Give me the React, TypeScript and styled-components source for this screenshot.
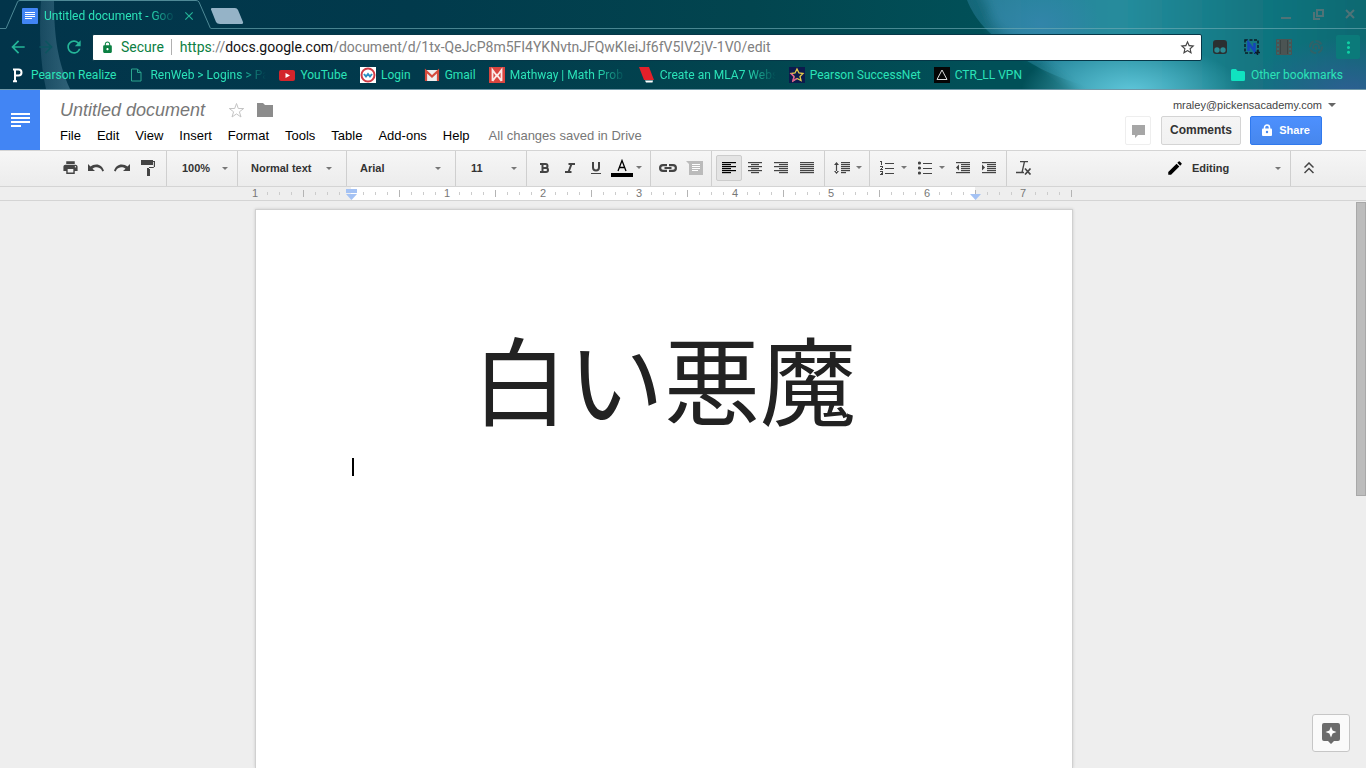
import React from "react";
import styled, { createGlobalStyle, css } from "styled-components";
import {
  MdPrint, MdLock, MdArrowBack, MdArrowForward, MdRefresh, MdStarBorder, MdMoreVert, MdClose, MdEdit,
} from "react-icons/md";

const Global = createGlobalStyle`
  *, *::before, *::after { box-sizing: border-box; }
  body { margin: 0; overflow: hidden; background: #eee; font-family: "Liberation Sans", Arial, sans-serif; }
  button, select, input { font: inherit; color: inherit; margin: 0; padding: 0; border: 0; background: none; border-radius: 0; }
  a { color: inherit; text-decoration: none; }
  svg { display: block; flex: none; }
`;

const Shell = styled.div`
  display: flex;
  flex-direction: column;
  height: 100vh;
`;

/* ---------- browser frame ---------- */

const Browser = styled.header`
  position: relative;
  display: flex;
  flex-direction: column;
  flex: none;
  height: 90px;
  border-bottom: 1px solid #6f98a8;
  color: #2be3b8;
  font-family: Roboto, sans-serif;
  font-size: 12px;
  background: linear-gradient(90deg, #02344a 0%, #013a4c 30%, #02454f 55%, #015058 72%, #015058 100%);
  isolation: isolate;
`;
const ThemeArt = styled.svg<{ $side: "left" | "right" }>`
  position: absolute;
  top: 0;
  ${(p) => p.$side}: 0;
  z-index: -1;
`;
const TabStrip = styled.div`
  display: flex;
  height: 29px;
`;
const StripEdge = styled.div<{ $grow?: boolean }>`
  display: flex;
  justify-content: space-between;
  align-items: center;
  flex: ${(p) => (p.$grow ? "1" : "0 0 6px")};
  border-bottom: 1px solid rgba(110, 170, 180, 0.65);
`;
const Tab = styled.div`
  position: relative;
  display: flex;
  align-items: center;
  gap: 6px;
  width: 205px;
  padding: 2px 15px 0 16px;
`;
const TabShape = styled.svg`
  position: absolute;
  left: 0;
  top: 0;
`;
const TabTitle = styled.span`
  flex: 1;
  overflow: hidden;
  white-space: nowrap;
  line-height: 16px;
  mask-image: linear-gradient(90deg, #000 80%, transparent);
`;
const PlainButton = styled.button`
  display: flex;
  align-items: center;
  justify-content: center;
`;
const NewTab = styled(PlainButton)`
  padding-top: 3px;
`;
const WindowControls = styled.div`
  display: flex;
  gap: 20px;
  padding-right: 10px;
  color: #4f7377;
`;
const NavRow = styled.div`
  display: flex;
  align-items: center;
  height: 36px;
  padding: 0 2px 0 8px;
`;
const NavButton = styled(PlainButton)<{ $dim?: boolean }>`
  width: 20px;
  height: 20px;
  margin-right: 8px;
  color: ${(p) => (p.$dim ? "#0d5560" : "#25b598")};
`;
const AddressBar = styled.div`
  display: flex;
  align-items: center;
  flex: 1;
  min-width: 0;
  height: 27px;
  margin-right: 2px;
  padding: 0 5px 0 8px;
  border: 1px solid #063748;
  border-radius: 2px;
  background: #fff;
  font-size: 14px;
  color: #0b8043;
  white-space: nowrap;
`;
const Secure = styled.span`
  padding: 0 7px;
  border-right: 1px solid #b0b0b0;
  margin-right: 8px;
`;
const Url = styled.div`
  flex: 1;
  overflow: hidden;
  color: #808080;
`;
const UrlScheme = styled.span`color: #0b8043;`;
const UrlHost = styled.span`color: #111;`;
const Extension = styled(PlainButton)<{ $active?: boolean }>`
  width: 24px;
  height: 24px;
  margin: 0 4px;
  border-radius: 2px;
  background: ${(p) => (p.$active ? "#0b7a7a" : "none")};
`;
const Bookmarks = styled.nav`
  display: flex;
  align-items: center;
  gap: 13px;
  height: 20px;
  padding: 0 23px 0 10px;
`;
const Bookmark = styled.a<{ $last?: boolean }>`
  display: flex;
  align-items: center;
  gap: 5px;
  white-space: nowrap;
  margin-left: ${(p) => (p.$last ? "auto" : "0")};
`;
const BookmarkLabel = styled.span<{ $fade?: boolean }>`
  line-height: 16px;
  ${(p) => p.$fade && css`
    width: 116px;
    mask-image: linear-gradient(90deg, #000 75%, transparent);
  `}
`;

/* ---------- document header ---------- */

const DocHeader = styled.header`
  display: flex;
  flex: none;
  height: 60px;
  background: #fff;
`;
const DocsHome = styled.a`
  display: flex;
  align-items: center;
  justify-content: center;
  width: 40px;
  background: #4285f4;
`;
const TitleBlock = styled.div`
  display: flex;
  flex-direction: column;
  flex: 1;
  padding: 8px 0 0 20px;
`;
const TitleRow = styled.div`
  display: flex;
  align-items: center;
  gap: 12px;
  height: 24px;
`;
const TitleInput = styled.input`
  width: 156px;
  height: 24px;
  font-size: 18px;
  font-style: italic;
  color: #777;
  outline: none;
`;
const MenuBar = styled.nav`
  display: flex;
  gap: 16px;
  height: 26px;
  align-items: center;
  font-size: 13px;
  color: #000;
`;
const SaveState = styled.span`
  margin-left: 3px;
  color: #777;
`;
const AccountBlock = styled.div`
  display: flex;
  flex-direction: column;
  align-items: flex-end;
  padding: 8px 30px 0 0;
`;
const Account = styled.button`
  display: flex;
  align-items: center;
  gap: 6px;
  height: 14px;
  font-size: 11px;
  color: #444;
`;
const Actions = styled.div`
  display: flex;
  gap: 9px;
  padding: 4px 14px 0 0;
`;
const Action = styled.button<{ $kind: "icon" | "plain" | "primary" }>`
  display: flex;
  align-items: center;
  justify-content: center;
  gap: 7px;
  height: 29px;
  padding-bottom: 2px;
  border-radius: 2px;
  font-size: 11px;
  font-weight: bold;
  ${(p) => p.$kind === "icon" && css`
    width: 26px;
    margin-right: 1px;
    padding: 2px 0 0;
    border: 1px solid #eee;
  `}
  ${(p) => p.$kind === "plain" && css`
    width: 80px;
    font-size: 12px;
    border: 1px solid #d4d4d4;
    background: linear-gradient(#f5f5f5, #f1f1f1);
    color: #333;
  `}
  ${(p) => p.$kind === "primary" && css`
    width: 72px;
    border: 1px solid #3079ed;
    background: linear-gradient(#4d90fe, #4787ed);
    color: #fff;
  `}
`;

/* ---------- toolbar ---------- */

const Toolbar = styled.div`
  display: flex;
  flex: none;
  height: 37px;
  border-top: 1px solid #d4d4d4;
  border-bottom: 1px solid #d4d4d4;
  background: linear-gradient(#f6f6f6, #ececec);
  color: #444;
  font-size: 11px;
  font-weight: bold;
`;
const Group = styled.div<{ $first?: boolean; $end?: boolean }>`
  display: flex;
  align-items: center;
  padding: 0 4px 2px;
  border-left: 1px solid #cfcfcf;
  ${(p) => p.$first && css`
    padding: 0 5px 2px 57px;
    border-left: 0;
  `}
  ${(p) => p.$end && css`
    width: 76px;
    padding-left: 5px;
  `}
`;
const Tool = styled.button<{ $on?: boolean }>`
  display: flex;
  align-items: center;
  justify-content: center;
  width: 26px;
  height: 26px;
  border: 1px solid ${(p) => (p.$on ? "#ccc" : "transparent")};
  border-radius: 2px;
  background: ${(p) => (p.$on ? "#e4e4e4" : "none")};
  color: ${(p) => (p.$on ? "#000" : "#444")};
`;
const ArrowTool = styled.button<{ $width?: number }>`
  display: flex;
  align-items: center;
  width: ${(p) => p.$width ?? 12}px;
  height: 26px;
  padding-left: 1px;
`;
const Picker = styled.label<{ $width: number; $inset: number }>`
  position: relative;
  display: flex;
  width: ${(p) => p.$width}px;
  border-left: 1px solid #cfcfcf;
  select {
    flex: 1;
    appearance: none;
    padding-left: ${(p) => p.$inset}px;
    padding-bottom: 2px;
    color: #333;
    outline: none;
  }
`;
const PickerArrow = styled.span<{ $right?: number }>`
  position: absolute;
  right: ${(p) => p.$right ?? 9}px;
  top: 16px;
  pointer-events: none;
`;
const ModePicker = styled(Picker)`
  margin-left: auto;
  border-left: 0;
`;
const ModeIcon = styled.span`
  position: absolute;
  left: 0;
  top: 8px;
  color: #000;
  pointer-events: none;
`;

/* ---------- ruler and page ---------- */

const RulerBar = styled.div`
  display: flex;
  justify-content: center;
  flex: none;
  height: 14px;
  padding-right: 40px;
  border-bottom: 1px solid #d4d4d4;
  overflow: hidden;
`;
const Scale = styled.div`
  position: relative;
  display: flex;
  flex: none;
  width: 816px;
  background: linear-gradient(90deg, transparent 96px, #fff 96px, #fff 720px, transparent 720px);
`;
const Mark = styled.span`
  display: flex;
  align-items: center;
  justify-content: center;
  flex: none;
  width: 12px;
  margin-left: -6px;
  margin-right: 6px;
  font-size: 11px;
  line-height: 13px;
  color: #777;
`;
const Tick = styled.i<{ $tall?: boolean }>`
  width: 1px;
  height: ${(p) => (p.$tall ? 7 : 3)}px;
  background: ${(p) => (p.$tall ? "#b4b4b4" : "#ccc")};
`;
const Indent = styled.svg<{ $at: "start" | "end" }>`
  position: absolute;
  top: 2px;
  left: ${(p) => (p.$at === "start" ? 90 : 714)}px;
`;
const Workspace = styled.main`
  display: flex;
  flex: 1;
  min-height: 0;
  background: #eee;
`;
const Canvas = styled.div`
  display: flex;
  justify-content: center;
  flex: 1;
  padding: 8px 28px 0 0;
`;
const Page = styled.article`
  width: 818px;
  padding: 96px;
  border: 1px solid #d0d0d0;
  border-bottom: 0;
  background: #fff;
  box-shadow: 0 0 3px rgba(0, 0, 0, 0.15);
`;
const Heading = styled.h1`
  margin: 0 0 10px;
  font: 400 96px/142px "Noto Sans CJK JP", sans-serif;
  color: #222;
  text-align: center;
`;
const Caret = styled.div`
  width: 2px;
  height: 18px;
  background: #000;
`;
const ScrollTrack = styled.div`
  width: 10px;
  padding-top: 1px;
`;
const ScrollThumb = styled.div`
  height: 52%;
  border: 1px solid #a8a8a8;
  background: #bcbcbc;
`;
const Explore = styled.button`
  position: fixed;
  right: 16px;
  bottom: 16px;
  display: flex;
  align-items: center;
  justify-content: center;
  width: 38px;
  height: 38px;
  border: 1px solid #c6c6c6;
  border-radius: 3px;
  background: #fafafa;
`;

const Down = ({ size = 6, color = "#777" }: { size?: number; color?: string }) => (
  <svg width={size} height={size / 2} viewBox="0 0 6 3"><path d="M0 0h6L3 3z" fill={color} /></svg>
);

/* Rows of a text block: x, width and y of each line */
const Lines = ({ rows, children, width = 14 }: { rows: number[][]; children?: React.ReactNode; width?: number }) => (
  <svg width={width} height="12" viewBox={`0 0 ${width} 12`} fill="currentColor">
    {rows.map(([x, w, y]) => <rect key={y} x={x} y={y} width={w} height="1.2" />)}
    {children}
  </svg>
);
const six = (short: number, align: number) =>
  [0, 1, 2, 3, 4, 5].map((i) => (i % 2 ? [(14 - short) * align, short, i * 2] : [0, 14, i * 2]));
const indented = [[0, 14, 0], [5, 9, 2], [5, 9, 4], [5, 9, 6], [5, 9, 8], [0, 14, 10]];

const UNDO = "M0 0v7h7L4.500 4.700C5.800 3.700 7.500 3.200 9 3.300c2.700.2 4.500 1.700 5.300 4.200L16 6.800C14.800 2.800 12 .5 8.300.5 6 .5 4 1.300 2.500 2.500z";

const DocIcon = () => (
  <svg width="16" height="16" viewBox="0 0 16 16">
    <rect width="16" height="16" rx="1" fill="#4285f4" />
    <path d="M3 4.500h10M3 6.500h10M3 8.500h10M3 10.500h7" stroke="#fff" strokeWidth="1.200" />
  </svg>
);

const bookmarks: { label: string; fade?: boolean; icon: React.ReactNode }[] = [
  { label: "Pearson Realize", icon: <path d="M5 15V2.500M3 2.500h5.500a3 3 0 010 6H6M3 14.300h4" fill="none" stroke="#fff" strokeWidth="2" /> },
  { label: "RenWeb > Logins > Pa", fade: true, icon: <path d="M2.500 2h6L12 5.500V14H2.500zM8.500 2v3.500H12" fill="none" stroke="#2aa58e" /> },
  { label: "YouTube", icon: <><rect y="3" width="16" height="11" rx="2" fill="#d3252c" /><path d="M6.500 6v5L11 8.500z" fill="#fff" /></> },
  { label: "Login", icon: <><rect width="16" height="16" fill="#fff" /><circle cx="8" cy="8" r="6.500" fill="#fff" stroke="#cf3b46" strokeWidth="2" /><path d="M4 7l2 2.500L8 7l2 2.500L12 7" fill="none" stroke="#2a8fc4" strokeWidth="2" /></> },
  { label: "Gmail", icon: <><path d="M1 3h14v11H1z" fill="#eee" /><path d="M2 14V4l6 5.500L14 4v10" fill="none" stroke="#d54b3d" strokeWidth="2.200" /></> },
  { label: "Mathway | Math Prob", fade: true, icon: <><rect width="16" height="16" fill="#d9453f" /><path d="M3.500 14V3L8 9l4.500-6v11M3.500 14L8 8l4.500 6" fill="none" stroke="#fbe9e7" strokeWidth="1.800" /></> },
  { label: "Create an MLA7 Webs", fade: true, icon: <><path d="M0 0h10l5 13H5z" fill="#e4202a" /><path d="M6 13.500h8l-.5 2H7z" fill="#fff" /></> },
  { label: "Pearson SuccessNet", icon: <><rect width="16" height="16" fill="#0c1a4d" /><path d="M8 2l2 4 4 .5-3 3 1 4-4-2-4 2.500 1-4.500-3-3 4-.5z" fill="none" stroke="#e3c94a" strokeWidth="1.300" /><path d="M5 9.500L4 14l4-2.500M2 6.500l3 3" fill="none" stroke="#e0559c" strokeWidth="1.300" /></> },
  { label: "CTR_LL VPN", icon: <><rect width="16" height="16" fill="#050505" /><path d="M8 3l5 9.500H3z" fill="none" stroke="#ddd" /></> },
];

function BrowserFrame() {
  return (
    <Browser>
      <ThemeArt $side="left" width="90" height="89" aria-hidden>
        <defs>
          <linearGradient id="beam" x1="0" x2="1">
            <stop offset="0" stopColor="#5d8ea6" stopOpacity=".25" /><stop offset="1" stopColor="#5d8ea6" stopOpacity=".5" />
          </linearGradient>
        </defs>
        <path d="M41 0h13c0 38 4 62 16 89H46C40 62 39 30 41 0z" fill="url(#beam)" />
      </ThemeArt>
      <ThemeArt $side="right" width="420" height="89" viewBox="0 0 420 89" aria-hidden>
        <defs>
          <linearGradient id="sky" x1="0" x2="1">
            <stop offset="0" stopColor="#2a7f9b" /><stop offset=".35" stopColor="#258c9c" />
            <stop offset=".65" stopColor="#127681" /><stop offset="1" stopColor="#0b656c" />
          </linearGradient>
          <radialGradient id="glow"><stop offset="0" stopColor="#5fc6da" /><stop offset="1" stopColor="#5fc6da" stopOpacity="0" /></radialGradient>
          <radialGradient id="dusk"><stop offset="0" stopColor="#2d5f92" /><stop offset="1" stopColor="#2d5f92" stopOpacity="0" /></radialGradient>
          <radialGradient id="haze"><stop offset="0" stopColor="#3585ad" stopOpacity=".8" /><stop offset="1" stopColor="#3585ad" stopOpacity="0" /></radialGradient>
          <filter id="soft"><feGaussianBlur stdDeviation="6" /></filter>
        </defs>
        <path d="M21 0h399v89H150C95 75 60 50 38 27 30 18 25 10 21 0z" fill="url(#sky)" opacity=".5" />
        <path d="M30-20h425v130H150C120 75 80 52 48 25z" fill="url(#sky)" filter="url(#soft)" />
        <ellipse cx="95" cy="24" rx="60" ry="40" fill="url(#haze)" />
        <ellipse cx="185" cy="92" rx="110" ry="50" fill="url(#glow)" />
        <ellipse cx="405" cy="92" rx="110" ry="55" fill="url(#dusk)" />
      </ThemeArt>

      <TabStrip>
        <StripEdge />
        <Tab>
          <TabShape width="205" height="29" fill="none" stroke="#4f8a97" aria-hidden>
            <path d="M0 28.500L11.500 2Q12 .5 14 .5H190Q192 .5 193 2L204.500 28.500" />
          </TabShape>
          <DocIcon />
          <TabTitle>Untitled document - Goo</TabTitle>
          <PlainButton aria-label="Close tab"><MdClose size={14} color="#25b598" /></PlainButton>
        </Tab>
        <StripEdge $grow>
          <NewTab aria-label="New tab">
            <svg width="34" height="16" viewBox="0 0 34 16"><path d="M0 1.500Q-.5 0 1 0H24q2 0 3 2l5 12q.5 2-1.500 2H9q-3 0-4-2z" fill="#95b3c7" /></svg>
          </NewTab>
          <WindowControls>
            <PlainButton aria-label="Minimize"><svg width="12" height="12"><path d="M1 10h10" stroke="currentColor" strokeWidth="2" /></svg></PlainButton>
            <PlainButton aria-label="Restore"><svg width="12" height="12" fill="none" stroke="currentColor" strokeWidth="2"><path d="M5 2h6v6H5zM2 4v7h6" /></svg></PlainButton>
            <PlainButton aria-label="Close"><svg width="12" height="12"><path d="M2 2l8 8M10 2l-8 8" stroke="currentColor" strokeWidth="2" /></svg></PlainButton>
          </WindowControls>
        </StripEdge>
      </TabStrip>

      <NavRow>
        <NavButton aria-label="Back"><MdArrowBack size={20} /></NavButton>
        <NavButton $dim aria-label="Forward"><MdArrowForward size={20} /></NavButton>
        <NavButton aria-label="Reload"><MdRefresh size={20} /></NavButton>
        <AddressBar>
          <MdLock size={13} />
          <Secure>Secure</Secure>
          <Url>
            <UrlScheme>https</UrlScheme>://<UrlHost>docs.google.com</UrlHost>/document/d/1tx-QeJcP8m5FI4YKNvtnJFQwKIeiJf6fV5IV2jV-1V0/edit
          </Url>
          <PlainButton aria-label="Bookmark this page"><MdStarBorder size={17} color="#444" /></PlainButton>
        </AddressBar>
        <Extension aria-label="Reader">
          <svg width="16" height="16"><rect x="1" y="1" width="14" height="14" rx="3" fill="#2b2f31" /><circle cx="5" cy="11" r="2.700" fill="#2a8a93" /><circle cx="11" cy="11" r="2.700" fill="#2a8a93" /></svg>
        </Extension>
        <Extension aria-label="Clipper">
          <svg width="16" height="16"><rect x="1" y="1" width="13" height="13" fill="none" stroke="#0b1d26" strokeWidth="1.500" strokeDasharray="3 1.500" /><path d="M4.500 12V4l6 8V4" fill="none" stroke="#1446b8" strokeWidth="2.500" /><path d="M13.500 11v5M11 13.500h5" stroke="#0b1d26" strokeWidth="1.500" /></svg>
        </Extension>
        <Extension aria-label="Video">
          <svg width="16" height="16"><rect width="16" height="16" rx="1" fill="#4b5453" /><path d="M2 1v14M14 1v14" stroke="#2d7479" strokeWidth="1.500" strokeDasharray="2 2" /><path d="M4.500 1v14M11.500 1v14" stroke="#3a4545" /></svg>
        </Extension>
        <Extension aria-label="Sync">
          <svg width="16" height="16" fill="none" stroke="#2f6269" strokeWidth="2"><circle cx="8" cy="8" r="6" strokeDasharray="7 2" /><path d="M5 10V8a3 3 0 016 0v2M8 8v3" /></svg>
        </Extension>
        <Extension $active aria-label="Menu"><MdMoreVert size={19} color="#10d0a4" /></Extension>
      </NavRow>

      <Bookmarks>
        {bookmarks.map((b) => (
          <Bookmark key={b.label} href="#">
            <svg width="16" height="16">{b.icon}</svg>
            <BookmarkLabel $fade={b.fade}>{b.label}</BookmarkLabel>
          </Bookmark>
        ))}
        <Bookmark $last href="#">
          <svg width="15" height="12"><path d="M0 1.500Q0 0 1.500 0H5l1.500 2H12.500Q14 2 14 3.500V10.500Q14 12 12.500 12H1.500Q0 12 0 10.500z" fill="#10e3c0" /></svg>
          <BookmarkLabel>Other bookmarks</BookmarkLabel>
        </Bookmark>
      </Bookmarks>
    </Browser>
  );
}

const menus = ["File", "Edit", "View", "Insert", "Format", "Tools", "Table", "Add-ons", "Help"];

function Header() {
  return (
    <DocHeader>
      <DocsHome href="#" aria-label="Docs home">
        <svg width="20" height="14" fill="#fff" shapeRendering="crispEdges"><path d="M1 0h19v2H1zM1 4h19v2H1zM1 8h19v2H1zM1 12h10v2H1z" /></svg>
      </DocsHome>
      <TitleBlock>
        <TitleRow>
          <TitleInput aria-label="Document title" defaultValue="Untitled document" />
          <PlainButton aria-label="Star">
            <svg width="17" height="17" viewBox="0 0 17 17" fill="none" stroke="#c4c4c4"><path d="M8.500 1.500l1.800 5h5.400l-4.300 3.300 1.600 5.200-4.500-3.100L4 15l1.600-5.200L1.300 6.500h5.400z" /></svg>
          </PlainButton>
          <PlainButton aria-label="Move to folder">
            <svg width="16" height="14" fill="#8c8c8c"><path d="M0 0h6l2 2h8v12H0z" /></svg>
          </PlainButton>
        </TitleRow>
        <MenuBar>
          {menus.map((m) => <PlainButton key={m}>{m}</PlainButton>)}
          <SaveState>All changes saved in Drive</SaveState>
        </MenuBar>
      </TitleBlock>
      <AccountBlock>
        <Account>mraley@pickensacademy.com <Down size={8} color="#666" /></Account>
        <Actions>
          <Action $kind="icon" aria-label="Open chat"><svg width="13" height="13" fill="#a6a6a6"><path d="M0 0h13v10H6l-3 3v-3H0z" /></svg></Action>
          <Action $kind="plain">Comments</Action>
          <Action $kind="primary">
            <svg width="10" height="12"><path d="M2.500 5V3.500a2.500 2.500 0 015 0V5" fill="none" stroke="#fff" strokeWidth="1.500" /><rect y="4.500" width="10" height="7.500" rx="1" fill="#fff" /><circle cx="5" cy="8" r="1.200" fill="#4787ed" /></svg>
            Share
          </Action>
        </Actions>
      </AccountBlock>
    </DocHeader>
  );
}

function Drop({ label, value, wide }: { label: string; value: string; wide?: boolean }) {
  return (
    <Picker $width={wide ? 109 : 71} $inset={wide ? 13 : 15}>
      <select aria-label={label} defaultValue={value}><option>{value}</option></select>
      <PickerArrow $right={wide ? 14 : 9}><Down /></PickerArrow>
    </Picker>
  );
}

function Tools() {
  return (
    <Toolbar role="toolbar">
      <Group $first>
        <Tool aria-label="Print"><MdPrint size={17} /></Tool>
        <Tool aria-label="Undo"><svg width="16" height="8" fill="currentColor"><path d={UNDO} /></svg></Tool>
        <Tool aria-label="Redo"><svg width="16" height="8" fill="currentColor"><path d={UNDO} transform="matrix(-1 0 0 1 16 0)" /></svg></Tool>
        <Tool aria-label="Paint format"><svg width="14" height="16" fill="currentColor"><path d="M0 0h12v1h2v6H8v2h1v7H6V8h6.800V2H12v3H0z" /></svg></Tool>
      </Group>
      <Drop label="Zoom" value="100%" />
      <Drop label="Style" value="Normal text" wide />
      <Drop label="Font" value="Arial" wide />
      <Drop label="Font size" value="11" />
      <Group>
        <Tool aria-label="Bold"><svg width="9" height="10" viewBox="0 0 9 10" fill="none" stroke="currentColor" strokeWidth="2"><path d="M0 1h5.500a1.800 1.800 0 010 4H2.500h3.500a2 2 0 010 4H0M2.500 1v8" /></svg></Tool>
        <Tool aria-label="Italic"><svg width="10" height="10" fill="none" stroke="currentColor" strokeWidth="2"><path d="M3.500 1H10M0 9h6.500M6.500 1L3.500 9" /></svg></Tool>
        <Tool aria-label="Underline"><svg width="10" height="12" fill="none" stroke="currentColor"><path d="M2 0v5.500a3 3 0 006 0V0" strokeWidth="2" /><path d="M0 11.500h10" /></svg></Tool>
        <Tool aria-label="Text colour"><svg width="22" height="18" viewBox="0 0 22 18"><path d="M7 12L11 1.500 15 12M8.500 8.500h5" fill="none" stroke="#000" strokeWidth="1.300" /><path d="M0 14h22v4H0z" fill="#000" /></svg></Tool>
        <ArrowTool $width={11} aria-label="Text colour options"><Down /></ArrowTool>
      </Group>
      <Group>
        <Tool aria-label="Insert link"><svg width="18" height="8" fill="none" stroke="currentColor" strokeWidth="2.200"><path d="M8 1.100H4a2.900 2.900 0 000 5.800h4M10 1.100h4a2.900 2.900 0 010 5.800h-4M5.500 4h7" /></svg></Tool>
        <Tool aria-label="Add comment"><svg width="17" height="14"><path d="M0 0h17v14H3V3z" fill="#bbb" /><path d="M6 3.500h8M6 5.500h8M6 7.500h8M6 9.500h6" stroke="#fff" /></svg></Tool>
      </Group>
      <Group>
        <Tool $on aria-label="Align left"><Lines rows={six(9, 0)} /></Tool>
        <Tool aria-label="Align centre"><Lines rows={six(8, 0.5)} /></Tool>
        <Tool aria-label="Align right"><Lines rows={six(9, 1)} /></Tool>
        <Tool aria-label="Justify"><Lines rows={six(14, 0)} /></Tool>
      </Group>
      <Group>
        <Tool aria-label="Line spacing">
          <Lines width={16} rows={[[7, 9, 0], [7, 9, 2], [7, 9, 4], [7, 9, 6], [7, 9, 8], [7, 5, 10]]}><path d="M1.900 2h1.200v8H1.900zM0 3l2.500-3L5 3zM0 9l2.500 3L5 9z" /></Lines>
        </Tool>
        <ArrowTool $width={10} aria-label="Line spacing options"><Down /></ArrowTool>
      </Group>
      <Group>
        <Tool aria-label="Numbered list">
          <svg width="14" height="14" fill="none" stroke="currentColor" shapeRendering="crispEdges"><path d="M5 2.500h9M5 7.500h9M5 12.500h9M0 .5h1.500V4M0 5.500h2.500v1L.5 8.500H3M0 10.500h2.500v3H0M1 12h1" /></svg>
        </Tool>
        <ArrowTool aria-label="Numbered list options"><Down /></ArrowTool>
        <Tool aria-label="Bulleted list">
          <svg width="14" height="14" fill="currentColor"><circle cx="1.500" cy="2" r="1.600" /><circle cx="1.500" cy="7" r="1.600" /><circle cx="1.500" cy="12" r="1.600" /><path d="M5 2h9v1H5zM5 7h9v1H5zM5 12h9v1H5z" /></svg>
        </Tool>
        <ArrowTool aria-label="Bulleted list options"><Down /></ArrowTool>
        <Tool aria-label="Decrease indent"><Lines rows={indented}><path d="M3 2.500v6L0 5.500z" /></Lines></Tool>
        <Tool aria-label="Increase indent"><Lines rows={indented}><path d="M0 2.500v6L3 5.500z" /></Lines></Tool>
      </Group>
      <Group>
        <Tool aria-label="Clear formatting"><svg width="16" height="14" fill="none" stroke="currentColor"><path d="M4 .5h8M8.500 .5L6 11.500" strokeWidth="1.300" /><path d="M0 11.500h8M9 7.500l5.500 6M14.500 7.500L9 13.500" strokeWidth="1.700" /></svg></Tool>
      </Group>
      <ModePicker $width={124} $inset={26}>
        <ModeIcon><MdEdit size={18} /></ModeIcon>
        <select aria-label="Mode" defaultValue="Editing"><option>Editing</option></select>
        <PickerArrow><Down /></PickerArrow>
      </ModePicker>
      <Group $end>
        <Tool aria-label="Hide menus"><svg width="10" height="12" fill="none" stroke="currentColor" strokeWidth="1.500"><path d="M.5 5.500L5 1l4.500 4.500M.5 11L5 6.500 9.500 11" /></svg></Tool>
      </Group>
    </Toolbar>
  );
}

function Ruler() {
  return (
    <RulerBar>
      <Scale>
        {Array.from({ length: 69 }, (_, i) => (
          <Mark key={i}>
            {i === 8 ? null : i % 8 === 0 ? Math.abs(i / 8 - 1) : <Tick $tall={i % 4 === 0} />}
          </Mark>
        ))}
        <Indent $at="start" width="12" height="11"><path d="M1 0h11v4H1zM1 5h11L6.500 11z" fill="#a4c2f4" /></Indent>
        <Indent $at="end" width="12" height="11"><path d="M1 5h11L6.500 11z" fill="#a4c2f4" /></Indent>
      </Scale>
    </RulerBar>
  );
}

export default function App() {
  return (
    <Shell>
      <Global />
      <BrowserFrame />
      <Header />
      <Tools />
      <Ruler />
      <Workspace>
        <Canvas>
          <Page>
            <Heading lang="ja">白い悪魔</Heading>
            <Caret />
          </Page>
        </Canvas>
        <ScrollTrack><ScrollThumb /></ScrollTrack>
      </Workspace>
      <Explore aria-label="Explore">
        <svg width="18" height="21" viewBox="0 0 18 21"><path d="M2 0h14q2 0 2 2v14q0 2-2 2h-4l-3 3-3-3H2q-2 0-2-2V2Q0 0 2 0z" fill="#6b6b6b" /><path d="M9 3.500l1.600 3.900L14.500 9l-3.900 1.600L9 14.500l-1.600-3.900L3.500 9l3.900-1.600z" fill="#fff" /></svg>
      </Explore>
    </Shell>
  );
}
